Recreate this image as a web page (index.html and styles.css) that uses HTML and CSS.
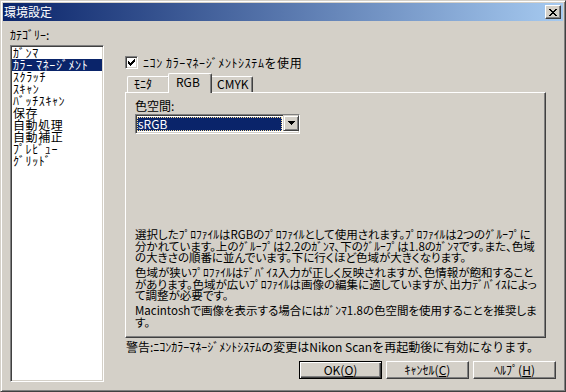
FILE: index.html
```html
<!DOCTYPE html>
<html lang="ja">
<head>
  <meta charset="UTF-8">
  <title>環境設定</title>
  <link rel="stylesheet" href="styles.css">
</head>
<body>
  <div class="window">
    <div class="titlebar">
      <span class="title">環境設定</span>
      <button class="close-btn">
        <svg width="8" height="7" viewBox="0 0 8 7"><path d="M0 0h2v1H0zM6 0h2v1H6zM1 1h2v1H1zM5 1h2v1H5zM2 2h4v1H2zM3 3h2v1H3zM2 4h4v1H2zM1 5h2v1H1zM5 5h2v1H5zM0 6h2v1H0zM6 6h2v1H6z" fill="#000"/></svg>
      </button>
    </div>
    <div class="client">
      <div class="category">
        <div class="label">ｶﾃｺﾞﾘｰ:</div>
        <ul class="listbox">
          <li>ｶﾞﾝﾏ</li>
          <li class="selected">ｶﾗｰ ﾏﾈｰｼﾞﾒﾝﾄ</li>
          <li>ｽｸﾗｯﾁ</li>
          <li>ｽｷｬﾝ</li>
          <li>ﾊﾞｯﾁｽｷｬﾝ</li>
          <li>保存</li>
          <li>自動処理</li>
          <li>自動補正</li>
          <li>ﾌﾟﾚﾋﾞｭｰ</li>
          <li>ｸﾞﾘｯﾄﾞ</li>
        </ul>
      </div>
      <div class="settings">
        <div class="check-row">
          <span class="checkbox">
            <svg width="7" height="7" viewBox="0 0 7 7"><path d="M0 2h1v3H0zM1 3h1v3H1zM2 4h1v3H2zM3 3h1v3H3zM4 2h1v3H4zM5 1h1v3H5zM6 0h1v3H6z" fill="#000"/></svg>
          </span>
          <span class="check-text">ﾆｺﾝ ｶﾗｰﾏﾈｰｼﾞﾒﾝﾄｼｽﾃﾑを使用</span>
        </div>
        <div class="tabs">
          <div class="tab">ﾓﾆﾀ</div>
          <div class="tab active">RGB</div>
          <div class="tab">CMYK</div>
        </div>
        <div class="panel">
          <div class="field-label">色空間:</div>
          <div class="combo">
            <div class="combo-value">sRGB</div>
            <div class="combo-btn">
              <svg width="7" height="4" viewBox="0 0 7 4"><path d="M0 0h7v1H0zM1 1h5v1H1zM2 2h3v1H2zM3 3h1v1H3z" fill="#000"/></svg>
            </div>
          </div>
          <div class="description">
            <p>選択したﾌﾟﾛﾌｧｲﾙはRGBのﾌﾟﾛﾌｧｲﾙとして使用されます。ﾌﾟﾛﾌｧｲﾙは2つのｸﾞﾙｰﾌﾟに<br>分かれています。上のｸﾞﾙｰﾌﾟは2.2のｶﾞﾝﾏ、下のｸﾞﾙｰﾌﾟは1.8のｶﾞﾝﾏです。また、色域<br>の大きさの順番に並んでいます。下に行くほど色域が大きくなります。</p>
            <p>色域が狭いﾌﾟﾛﾌｧｲﾙはﾃﾞﾊﾞｲｽ入力が正しく反映されますが、色情報が飽和すること<br>があります。色域が広いﾌﾟﾛﾌｧｲﾙは画像の編集に適していますが、出力ﾃﾞﾊﾞｲｽによっ<br>て調整が必要です。</p>
            <p>Macintoshで画像を表示する場合にはｶﾞﾝﾏ1.8の色空間を使用することを推奨しま<br>す。</p>
          </div>
        </div>
        <p class="warning">警告:ﾆｺﾝｶﾗｰﾏﾈｰｼﾞﾒﾝﾄｼｽﾃﾑの変更はNikon Scanを再起動後に有効になります。</p>
        <div class="buttons">
          <button class="btn default">OK(<u>O</u>)</button>
          <button class="btn">ｷｬﾝｾﾙ(<u>C</u>)</button>
          <button class="btn">ﾍﾙﾌﾟ(<u>H</u>)</button>
        </div>
      </div>
    </div>
  </div>
</body>
</html>
```

FILE: styles.css
```css
* {
  box-sizing: border-box;
}

body {
  margin: 0;
  background: #d4d0c8;
  font-family: "Noto Sans CJK JP", sans-serif;
  font-size: 12px;
  line-height: 12px;
  color: #000;
  overflow: hidden;
}

.window {
  width: 566px;
  height: 392px;
  border: 1px solid;
  border-color: #d4d0c8 #404040 #404040 #d4d0c8;
  box-shadow: inset 1px 1px #fff, inset -1px -1px #808080;
  padding: 2px;
  display: flex;
  flex-direction: column;
}

.titlebar {
  height: 18px;
  margin-bottom: 1px;
  padding: 0 2px 0 1px;
  display: flex;
  align-items: center;
  justify-content: space-between;
  background: linear-gradient(to right, #0a246a, #a6caf0);
}

.title {
  color: #fff;
}

.close-btn {
  width: 16px;
  height: 14px;
  padding: 0;
  border: 1px solid;
  border-color: #fff #404040 #404040 #fff;
  box-shadow: inset -1px -1px #808080;
  background: #d4d0c8;
  display: flex;
  align-items: center;
  justify-content: center;
}

.client {
  flex: 1;
  display: flex;
}

/* category list */
.category {
  width: 101px;
  padding-left: 7px;
}

.category .label {
  margin-top: 7px;
}

.listbox {
  list-style: none;
  margin: 4px 0 0;
  padding: 1px;
  height: 337px;
  background: #fff;
  border: 1px solid;
  border-color: #808080 #fff #fff #808080;
  box-shadow: inset 1px 1px #404040, inset -1px -1px #d4d0c8;
}

.listbox li {
  height: 12px;
  padding-left: 1px;
  white-space: nowrap;
  letter-spacing: 0.6px;
}

.listbox li.selected {
  background: #0a246a;
  color: #fff;
}

/* right side */
.settings {
  margin-left: 21px;
  width: 431px;
  display: flex;
  flex-direction: column;
}

.check-row {
  margin-top: 34px;
  height: 13px;
  display: flex;
  align-items: center;
  gap: 5px;
}

.check-text {
  letter-spacing: 0.6px;
}

.checkbox {
  width: 13px;
  height: 13px;
  border: 1px solid;
  border-color: #808080 #fff #fff #808080;
  box-shadow: inset 1px 1px #404040, inset -1px -1px #d4d0c8;
  background: #fff;
  display: flex;
  align-items: center;
  justify-content: center;
}

.tabs {
  margin-top: 4px;
  height: 19px;
  padding-left: 2px;
  display: flex;
  align-items: flex-end;
}

.tab {
  width: 43px;
  height: 16px;
  padding: 1px 0 0 6px;
  border: 1px solid #fff;
  border-right-color: #404040;
  border-bottom: 0;
  border-radius: 2px 2px 0 0;
  box-shadow: inset -1px 0 #808080;
  white-space: nowrap;
}

.tab.active {
  position: relative;
  z-index: 1;
  width: 44px;
  height: 20px;
  margin: 0 -2px -1px;
  padding: 2px 0 0 7px;
  background: #d4d0c8;
}

.panel {
  width: 421px;
  height: 246px;
  border: 1px solid;
  border-color: #fff #404040 #404040 #fff;
  box-shadow: inset -1px -1px #808080;
  padding: 7px 9px 9px;
  display: flex;
  flex-direction: column;
}

.combo {
  margin-top: 2px;
  width: 165px;
  height: 20px;
  padding: 1px;
  display: flex;
  background: #fff;
  border: 1px solid;
  border-color: #808080 #fff #fff #808080;
  box-shadow: inset 1px 1px #404040, inset -1px -1px #d4d0c8;
}

.combo-value {
  flex: 1;
  margin: 1px 1px 1px 0;
  background: #0a246a;
  color: #fff;
  border: 1px dotted #f5db95;
  line-height: 12px;
}

.combo-btn {
  width: 16px;
  height: 16px;
  margin: -1px -1px 0 0;
  border: 1px solid;
  border-color: #d4d0c8 #404040 #404040 #d4d0c8;
  box-shadow: inset 1px 1px #fff, inset -1px -1px #808080;
  background: #d4d0c8;
  display: flex;
  align-items: center;
  justify-content: center;
}

.description {
  margin-top: auto;
  white-space: nowrap;
  font-size: 11.5px;
  line-height: 11.5px;
  font-feature-settings: "palt";
}

.description p {
  margin: 0;
}

.description p + p {
  margin-top: 3.5px;
}

.warning {
  margin: 3px 0 0 1px;
  white-space: nowrap;
}

.buttons {
  margin-top: 8px;
  display: flex;
  justify-content: flex-end;
  gap: 4px;
}

.btn {
  width: 83px;
  height: 18px;
  padding: 0;
  font: inherit;
  color: #000;
  background: #d4d0c8;
  border: 1px solid;
  border-color: #fff #404040 #404040 #fff;
  box-shadow: inset -1px -1px #808080;
}

.btn.default {
  border-color: #000;
  box-shadow: inset 1px 1px #fff, inset -1px -1px #404040, inset -2px -2px #808080;
}
```
